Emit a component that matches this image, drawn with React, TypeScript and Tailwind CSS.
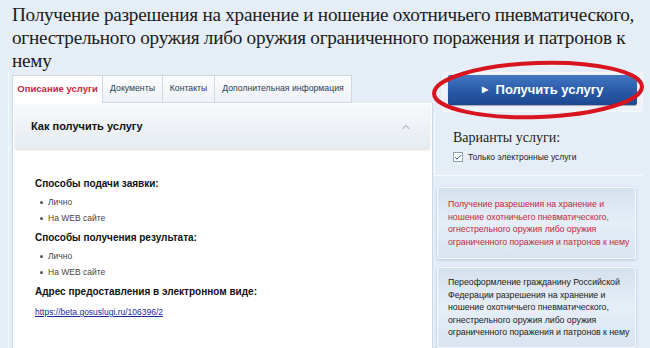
import { ChevronUp, Check } from "lucide-react";

const tabs = [
  { label: "Документы", w: "w-[60px]" },
  { label: "Контакты", w: "w-[52px]" },
  { label: "Дополнительная информация", w: "w-[137px]" },
];

function Bullet({ text }: { text: string }) {
  return (
    <li className="flex items-center gap-[5px] pl-[5px] text-[8.5px] leading-[16px] text-[#444]">
      <span className="w-[3px] h-[3px] rounded-full bg-[#555]" />
      {text}
    </li>
  );
}

export default function App() {
  return (
    <div className="relative w-[650px] h-[348px] overflow-hidden bg-[#e5edf7] font-['Liberation_Sans',Arial,sans-serif]">
      <h1 className="h-[72px] pl-[12px] pr-[2px] pt-[3px] font-['Liberation_Serif',serif] text-[19.2px] leading-[23px] tracking-[-0.25px] text-[#1b1b1b]">
        Получение разрешения на хранение и ношение охотничьего пневматического, огнестрельного оружия либо оружия ограниченного поражения и патронов к нему
      </h1>

      <div className="flex pl-[8px]">
        {/* left */}
        <div className="w-[425px] border-l border-[#f4f8fc] pl-[3px] pt-[3px]">
          <div className="flex h-[28px] items-end">
            <div className="flex h-[28px] w-[91px] items-center justify-center border border-b-0 border-[#cfd9e3] bg-white text-[9.5px] font-bold text-[#c4283c]">
              Описание услуги
            </div>
            {tabs.map((t) => (
              <div
                key={t.label}
                className={`flex h-[28px] ${t.w} items-center justify-center border border-l-0 border-[#cfd9e3] bg-gradient-to-b from-[#fbfcfd] to-[#eef2f6] text-[8.7px] text-[#2c3d55]`}
              >
                {t.label}
              </div>
            ))}
          </div>
          <div className="h-[250px] border-l border-r border-[#cfd9e3] bg-white px-[2px] pt-[1px]">
            <div className="flex h-[45px] items-center justify-between bg-gradient-to-b from-[#f6f8fb] to-[#e6ecf2] pl-[16px] pr-[18px] shadow-[0_1px_2px_rgba(0,0,0,0.12)]">
              <span className="text-[11px] font-bold text-[#111]">Как получить услугу</span>
              <ChevronUp size={12} strokeWidth={2.5} className="text-[#b7c1cc]" />
            </div>
            <div className="pl-[20px] pt-[27px]">
              <p className="text-[10px] font-bold leading-[16px] text-[#111]">Способы подачи заявки:</p>
              <ul className="mt-[2px]">
                <Bullet text="Лично" />
                <Bullet text="На WEB сайте" />
              </ul>
              <p className="mt-[4px] text-[10px] font-bold leading-[16px] text-[#111]">Способы получения результата:</p>
              <ul className="mt-[2px]">
                <Bullet text="Лично" />
                <Bullet text="На WEB сайте" />
              </ul>
              <p className="mt-[4px] text-[10px] font-bold leading-[16px] text-[#111]">
                Адрес предоставления в электронном виде:
              </p>
              <a className="mt-[5px] block text-[8.5px] leading-[14px] text-[#1b2aa0] underline">
                https://beta.gosuslugi.ru/106396/2
              </a>
            </div>
          </div>
          <div className="h-[10px] border-l border-[#cfd9e3] bg-[#e9f2f8]" />
        </div>

        {/* right */}
        <div className="flex w-[210px] flex-col">
          <div className="ml-[9px] rounded-[3px] border border-[#f4f8fc] bg-[#edf3f9] px-[5px] pb-[6px] pt-[2px]">
            <button className="flex h-[30px] w-full items-center justify-center gap-[8px] rounded-[2px] bg-gradient-to-b from-[#4377c4] via-[#2a5ca9] to-[#1c4790] text-[13px] font-bold text-white shadow-[0_1px_1px_rgba(0,0,0,0.3)]">
              <span className="text-[8px]">▶</span>
              Получить услугу
            </button>
          </div>
          <div className="mt-[2px] ml-[1px] h-[62px] border-b border-l border-[#f6f9fc] pl-[18px] pt-[15px]">
            <p className="font-['Liberation_Serif',serif] text-[14px] leading-[18px] text-[#1b1b1b]">Варианты услуги:</p>
            <div className="mt-[4px] flex items-center gap-[5px]">
              <span className="flex h-[10px] w-[10px] items-center justify-center border border-[#8da2b8] bg-white">
                <Check size={9} strokeWidth={3} className="text-[#2a4c80]" />
              </span>
              <span className="text-[8.5px] text-[#222]">Только электронные услуги</span>
            </div>
          </div>
          <div className="ml-[4px] mr-[7px] mt-[11px] flex h-[72px] flex-col justify-center rounded-[2px] border border-[#f4f8fc] bg-gradient-to-b from-[#d5e1ee] via-[#e6eef7] to-[#d9e4f0] pl-[10px] pr-[1px] text-[8.8px] leading-[12.5px] tracking-[-0.05px] text-[#c4283c] shadow-[0_1px_3px_rgba(80,110,150,0.35)]">
            Получение разрешения на хранение и ношение охотничьего пневматического, огнестрельного оружия либо оружия ограниченного поражения и патронов к нему
          </div>
          <div className="ml-[4px] mr-[7px] mt-[8px] flex h-[81px] flex-col justify-center rounded-[2px] border border-[#f4f8fc] bg-gradient-to-b from-[#d5e1ee] via-[#e6eef7] to-[#d9e4f0] pl-[10px] pr-[1px] text-[8.8px] leading-[12.5px] tracking-[-0.05px] text-[#1b1b1b] shadow-[0_1px_3px_rgba(80,110,150,0.35)]">
            Переоформление гражданину Российской Федерации разрешения на хранение и ношение охотничьего пневматического, огнестрельного оружия либо оружия ограниченного поражения и патронов к нему
          </div>
        </div>
      </div>

      <svg className="pointer-events-none absolute left-0 top-0" width="650" height="348">
        <ellipse cx="538" cy="90" rx="104" ry="27" fill="none" stroke="#d8141f" strokeWidth="4" transform="rotate(-2 538 90)" />
      </svg>
    </div>
  );
}
